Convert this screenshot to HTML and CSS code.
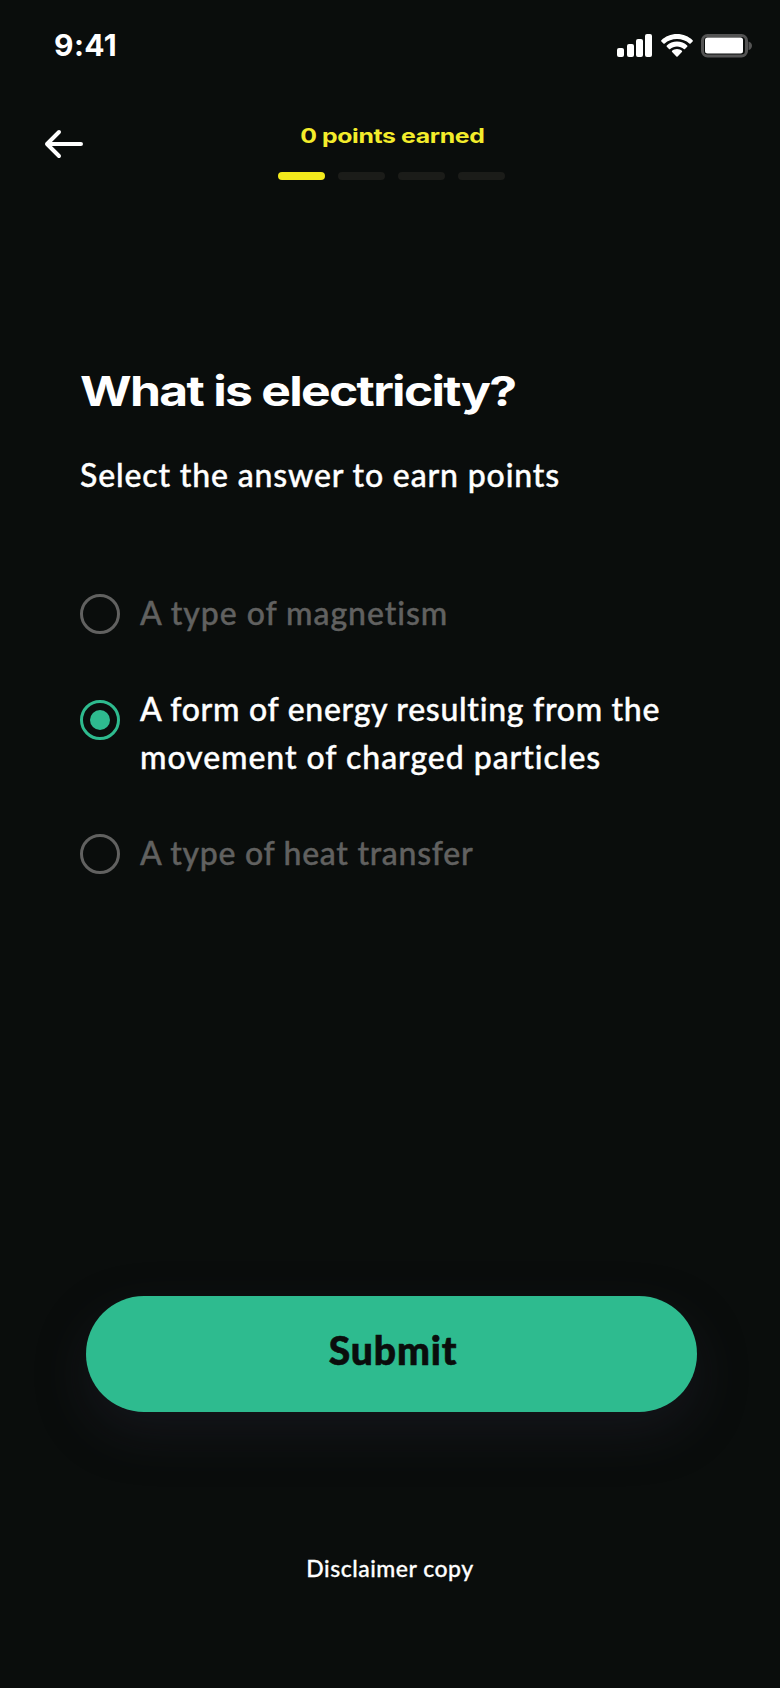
FILE: index.html
```
<!DOCTYPE html>
<html lang="en">
<head>
    <meta charset="utf-8">
    <title>Quiz</title>
    <link rel="stylesheet" href="styles.css">
</head>
<body>
    <div class="statusbar">
        <span class="time">9:41</span>
        <div class="status-icons">
            <svg class="signal" width="36" height="24" viewBox="0 0 36 24" fill="#fff">
                <rect x="0" y="14" width="7" height="9" rx="2"/>
                <rect x="10" y="10" width="7" height="13" rx="2"/>
                <rect x="19" y="5" width="7" height="18" rx="2"/>
                <rect x="28" y="0" width="7" height="23" rx="2"/>
            </svg>
            <svg class="wifi" width="32" height="24" viewBox="0 0 32 24" fill="#fff">
                <path d="M16 0C22.200 0 27.800 2.400 31.600 6.200Q32.200 6.900 31.600 7.500L29.600 9.500Q29 10 28.300 9.500C25.200 6.600 20.800 5 16 5S6.800 6.600 3.700 9.500Q3 10 2.400 9.500L.4 7.500Q-.2 6.900 .4 6.200C4.200 2.400 9.800 0 16 0Z"/>
                <path d="M16 7.500C20 7.500 23.600 9 26.200 11.500Q26.800 12.200 26.200 12.800L24 14.900Q23.400 15.400 22.800 14.900C21 13.300 18.600 12.400 16 12.400S11 13.300 9.200 14.900Q8.600 15.400 8 14.900L5.800 12.800Q5.200 12.200 5.800 11.500C8.400 9 12 7.500 16 7.500Z"/>
                <path d="M16 15C18 15 19.700 15.700 20.900 16.800Q21.500 17.500 20.900 18.100L16.600 22.500Q16 23 15.400 22.500L11.100 18.100Q10.500 17.500 11.100 16.800C12.300 15.700 14 15 16 15Z"/>
            </svg>
            <svg class="battery" width="52" height="24" viewBox="0 0 52 24">
                <rect x="1.500" y="1.500" width="44" height="20.500" rx="5" fill="none" stroke="#545454" stroke-width="3"/>
                <rect x="4" y="3.500" width="38" height="16" rx="2.500" fill="#fff"/>
                <path d="M47.500 7.500C50 8 51 10 51 11.700S50 15.500 47.500 16Z" fill="#545454"/>
            </svg>
        </div>
    </div>

    <div class="header">
        <svg class="back" width="40" height="30" viewBox="0 0 40 30" fill="none" stroke="#fff" stroke-width="4" stroke-linecap="round" stroke-linejoin="round">
            <path d="M37 15H3M15 3L3 15L15 27"/>
        </svg>
        <div class="progress">
            <p class="points">0 points earned</p>
            <div class="steps">
                <span class="step active"></span>
                <span class="step"></span>
                <span class="step"></span>
                <span class="step"></span>
            </div>
        </div>
    </div>

    <div class="question">
        <h1>What is electricity?</h1>
        <p class="hint">Select the answer to earn points</p>
        <div class="answers">
            <div class="answer">
                <span class="radio"></span>
                <p class="wide">A type of magnetism</p>
            </div>
            <div class="answer selected">
                <span class="radio"></span>
                <p>A form of energy resulting from the<br><span class="wide">movement of charged particles</span></p>
            </div>
            <div class="answer">
                <span class="radio"></span>
                <p>A type of heat transfer</p>
            </div>
        </div>
    </div>

    <button class="submit">Submit</button>
    <p class="disclaimer">Disclaimer copy</p>
</body>
</html>
```
FILE: styles.css
```
* {
    box-sizing: border-box;
    margin: 0;
}
body {
    width: 780px;
    height: 1688px;
    overflow: hidden;
    background-color: #0a0d0c;
    color: white;
    font-family: Lato, sans-serif;
    display: flex;
    flex-direction: column;
}
.statusbar {
    height: 94px;
    padding: 34px 27px 0 54px;
    display: flex;
    justify-content: space-between;
}
.time {
    font-family: Inter, sans-serif;
    font-size: 30px;
    font-weight: 700;
    line-height: 23px;
    letter-spacing: 0.4px;
}
.status-icons {
    display: flex;
}
.wifi {
    margin-left: 8px;
}
.battery {
    margin-left: 8px;
}
.header {
    height: 278px;
    padding-left: 44px;
    padding-top: 25px;
    display: flex;
    align-items: flex-start;
}
.back {
    margin-top: 10px;
}
.progress {
    margin-left: 193px;
    width: 230px;
}
.points {
    width: fit-content;
    margin: 0 auto;
    font-family: Inter, sans-serif;
    font-size: 20px;
    font-weight: 700;
    line-height: 34px;
    height: 53px;
    letter-spacing: -0.3px;
    white-space: nowrap;
    color: #f3ec2b;
    transform: scaleX(1.24);
}
.steps {
    display: flex;
    gap: 13px;
    padding-left: 1px;
}
.step {
    width: 47px;
    height: 8px;
    flex-shrink: 0;
    border-radius: 4px;
    background-color: #1b1c19;
}
.step.active {
    background-color: #f3ea1c;
}
.question {
    height: 924px;
    padding-left: 80px;
}
h1 {
    width: fit-content;
    font-family: Inter, sans-serif;
    font-size: 41px;
    font-weight: 700;
    line-height: 38px;
    letter-spacing: -1.4px;
    white-space: nowrap;
    transform: scaleX(1.215);
    transform-origin: left;
}
.hint {
    margin-top: 41px;
    font-size: 32px;
    font-weight: 500;
    line-height: 48px;
    letter-spacing: 0.85px;
    white-space: nowrap;
    -webkit-text-stroke: 0.4px;
}
.answers {
    margin-top: 91px;
    display: flex;
    flex-direction: column;
    gap: 48px;
}
.answer {
    display: flex;
    align-items: flex-start;
    gap: 20px;
    font-size: 32px;
    font-weight: 500;
    line-height: 48px;
    letter-spacing: 0.7px;
    color: #616160;
    white-space: nowrap;
}
.answer p {
    margin: -1px 0 1px;
    -webkit-text-stroke: 0.4px;
}
.answer .wide {
    letter-spacing: 0.95px;
}
.radio {
    width: 40px;
    height: 40px;
    margin-top: 4px;
    border: 3px solid #616160;
    border-radius: 50%;
    display: flex;
    align-items: center;
    justify-content: center;
}
.selected {
    color: white;
}
.selected .radio {
    margin-top: 14px;
    border-color: #2ebb8f;
}
.selected .radio::after {
    content: "";
    width: 20px;
    height: 20px;
    border-radius: 50%;
    background-color: #2ebb8f;
}
.submit {
    width: 611px;
    height: 116px;
    margin-left: 86px;
    flex-shrink: 0;
    border: none;
    border-radius: 58px;
    background-color: #2ebb8f;
    color: #0a0d0c;
    font-family: Lato, sans-serif;
    font-size: 39px;
    font-weight: 900;
    letter-spacing: 0.9px;
    padding-bottom: 9px;
    padding-left: 9px;
    -webkit-text-stroke: 0.6px;
    box-shadow: 0 20px 50px rgba(40, 36, 55, 0.35);
}
.disclaimer {
    margin-top: 140px;
    text-align: center;
    font-size: 23px;
    font-weight: 500;
    line-height: 32px;
    letter-spacing: 0.5px;
    -webkit-text-stroke: 0.3px;
}
```
